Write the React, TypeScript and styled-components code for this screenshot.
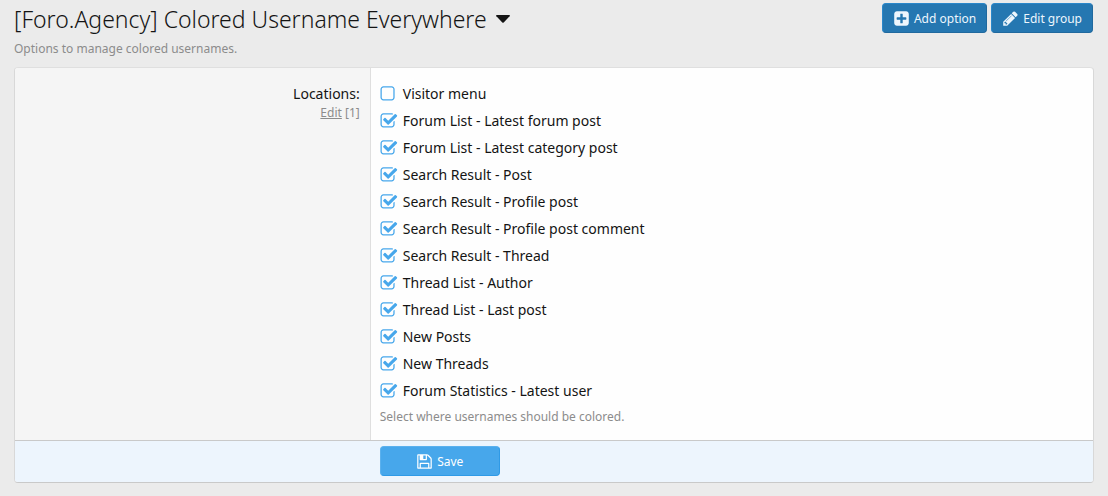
import React, { useState } from "react";
import styled, { createGlobalStyle } from "styled-components";

const GlobalStyle = createGlobalStyle`
  * { box-sizing: border-box; }
  body {
    margin: 0;
    background: #ebebeb;
    color: #141414;
    font-family: "Segoe UI", "Noto Sans", "Open Sans", sans-serif;
    font-size: 14px;
    line-height: 21px;
  }
`;

const paths = {
  plus: "M1408 960v-128q0-26-19-45t-45-19h-320v-320q0-26-19-45t-45-19h-128q-26 0-45 19t-19 45v320h-320q-26 0-45 19t-19 45v128q0 26 19 45t45 19h320v320q0 26 19 45t45 19h128q26 0 45-19t19-45v-320h320q26 0 45-19t19-45zm256-544v960q0 119-84.5 203.5t-203.5 84.5h-960q-119 0-203.5-84.5t-84.5-203.5v-960q0-119 84.5-203.5t203.5-84.5h960q119 0 203.5 84.5t84.5 203.5z",
  pencil: "M491 1536l91-91-235-235-91 91v107h128v128h107zm523-928q0-22-22-22-10 0-17 7l-542 542q-7 7-7 17 0 22 22 22 10 0 17-7l542-542q7-7 7-17zm-54-192l416 416-832 832h-416v-416zm683 96q0 53-37 90l-166 166-416-416 166-165q36-38 90-38 53 0 91 38l235 234q37 39 37 91z",
  save: "M512 1536h768v-384h-768v384zm896 0h128v-896q0-14-10-38.5t-20-34.5l-281-281q-10-10-34-20t-39-10v416q0 40-28 68t-68 28h-576q-40 0-68-28t-28-68v-416h-128v1280h128v-416q0-40 28-68t68-28h832q40 0 68 28t28 68v416zm-384-928v-320q0-13-9.5-22.5t-22.5-9.5h-192q-13 0-22.5 9.5t-9.5 22.5v320q0 13 9.5 22.5t22.5 9.5h192q13 0 22.5-9.5t9.5-22.5zm640 32v928q0 40-28 68t-68 28h-1344q-40 0-68-28t-28-68v-1344q0-40 28-68t68-28h928q40 0 88 20t76 48l280 280q28 28 48 76t20 88z",
  box: "M1312 256h-832q-66 0-113 47t-47 113v832q0 66 47 113t113 47h832q66 0 113-47t47-113v-832q0-66-47-113t-113-47zm288 160v832q0 119-84.5 203.5t-203.5 84.5h-832q-119 0-203.5-84.5t-84.5-203.5v-832q0-119 84.5-203.5t203.5-84.5h832q119 0 203.5 84.5t84.5 203.5z",
  checkedBox: "M1472 930v318q0 119-84.5 203.5t-203.5 84.5h-832q-119 0-203.5-84.5t-84.5-203.5v-832q0-119 84.5-203.5t203.5-84.5h832q63 0 117 25 15 7 18 23 3 17-9 29l-49 49q-10 10-23 10-3 0-9-2-23-6-45-6h-832q-66 0-113 47t-47 113v832q0 66 47 113t113 47h832q66 0 113-47t47-113v-254q0-13 9-22l64-64q10-10 23-10 6 0 12 3 20 8 20 29zm231-489l-814 814q-24 24-57 24t-57-24l-430-430q-24-24-24-57t24-57l110-110q24-24 57-24t57 24l263 263 647-647q24-24 57-24t57 24l110 110q24 24 24 57t-24 57z",
};

const Glyph = styled.svg<{ $size: number }>`
  flex: none;
  display: block;
  width: ${(p) => p.$size}px;
  height: ${(p) => p.$size}px;
  fill: currentColor;
`;

function Icon({ name, size, left = 0 }: { name: keyof typeof paths; size: number; left?: number }) {
  return (
    <Glyph $size={size} viewBox={`${left} 0 1792 1792`} aria-hidden="true">
      <path d={paths[name]} />
    </Glyph>
  );
}

const Page = styled.main`
  padding: 3px 14px 13px;
`;

const Header = styled.header`
  display: flex;
  align-items: flex-start;
  justify-content: space-between;
  gap: 16px;
  margin-bottom: 8px;
`;

const Title = styled.h1`
  margin: 0;
  font-size: 23px;
  font-weight: 300;
  line-height: 32px;
`;

const TitleButton = styled.button`
  display: flex;
  align-items: center;
  gap: 9px;
  padding: 0;
  border: 0;
  background: none;
  color: inherit;
  font: inherit;
  text-align: left;
  cursor: pointer;
`;

const Caret = styled.svg`
  width: 14px;
  height: 8px;
  fill: currentColor;
`;

const Description = styled.p`
  margin: 4px 0 0;
  color: #8c8c8c;
  font-size: 12px;
  line-height: 20px;
`;

const Actions = styled.div`
  display: flex;
  flex: none;
  gap: 4px;
  padding-right: 1px;
`;

const Button = styled.button<{ $primary?: boolean }>`
  display: flex;
  align-items: center;
  justify-content: center;
  gap: 4px;
  height: 30px;
  min-width: ${(p) => (p.$primary ? "120px" : "0")};
  padding: 0 10px;
  border: 1px solid;
  border-color: ${(p) =>
    p.$primary ? "#5bb1ee #2f9ae6 #2f9ae6 #5bb1ee" : "#2a87ca #20699e #20699e #2a87ca"};
  border-radius: 4px;
  background: ${(p) => (p.$primary ? "#47a7eb" : "#2577b1")};
  color: ${(p) => (p.$primary ? "#ffffff" : "#edf6fd")};
  font: inherit;
  font-size: 12px;
  cursor: pointer;
`;

const Panel = styled.form`
  overflow: hidden;
  border: 1px solid;
  border-color: #dfdfdf #d8d8d8 #c9c9c9 #d8d8d8;
  border-radius: 4px;
  background: #fefefe;
`;

const Row = styled.div`
  display: grid;
  grid-template-columns: 33% 1fr;
`;

const LabelCell = styled.div`
  padding: 15px 10px;
  border-right: 1px solid #dfdfdf;
  background: #f5f5f5;
  text-align: right;
`;

const Hint = styled.div`
  color: #8c8c8c;
  font-size: 12px;
  line-height: 18px;

  a { color: inherit; }
`;

const ControlCell = styled.div`
  padding: 15px 9px 14px;
`;

const Choices = styled.ul`
  display: grid;
  gap: 6px;
  margin: 0;
  padding: 0;
  list-style: none;
`;

const Choice = styled.label`
  position: relative;
  display: inline-flex;
  align-items: center;
  gap: 5px;
  height: 21px;
  vertical-align: top;
  cursor: pointer;
`;

const Box = styled.span`
  color: #47a7eb;
`;

const Check = styled.input`
  position: absolute;
  left: 0;
  width: 18px;
  height: 18px;
  margin: 0;
  opacity: 0;
  cursor: pointer;
`;

const Explain = styled.p`
  margin: 6px 0 0;
  color: #8c8c8c;
  font-size: 12px;
  line-height: 19px;
`;

const SubmitRow = styled(Row)`
  border-top: 1px solid #c9c9c9;
  background: #edf5fd;
`;

const SubmitCell = styled.div`
  grid-column: 2;
  padding: 5px 9px 6px;
`;

const locations = [
  "Visitor menu",
  "Forum List - Latest forum post",
  "Forum List - Latest category post",
  "Search Result - Post",
  "Search Result - Profile post",
  "Search Result - Profile post comment",
  "Search Result - Thread",
  "Thread List - Author",
  "Thread List - Last post",
  "New Posts",
  "New Threads",
  "Forum Statistics - Latest user",
];

function Location({ label, initial }: { label: string; initial: boolean }) {
  const [checked, setChecked] = useState(initial);
  return (
    <Choice>
      <Check type="checkbox" checked={checked} onChange={(e) => setChecked(e.target.checked)} />
      <Box>
        <Icon name={checked ? "checkedBox" : "box"} size={18} left={checked ? 16 : 144} />
      </Box>
      {label}
    </Choice>
  );
}

export default function App() {
  return (
    <Page>
      <GlobalStyle />
      <Header>
        <div>
          <Title>
            <TitleButton type="button">
              [Foro.Agency] Colored Username Everywhere
              <Caret viewBox="0 0 14 8" aria-hidden="true">
                <path d="M.6 0h12.8q.9.4.2 1.200L7.700 7.500q-.7.700-1.400 0L.4 1.200Q-.3.400.6 0z" />
              </Caret>
            </TitleButton>
          </Title>
          <Description>Options to manage colored usernames.</Description>
        </div>
        <Actions>
          <Button type="button"><Icon name="plus" size={17} />Add option</Button>
          <Button type="button"><Icon name="pencil" size={17} />Edit group</Button>
        </Actions>
      </Header>
      <Panel onSubmit={(e) => e.preventDefault()}>
        <Row>
          <LabelCell>
            <div id="locations">Locations:</div>
            <Hint><a href="#edit">Edit</a> [1]</Hint>
          </LabelCell>
          <ControlCell>
            <Choices role="group" aria-labelledby="locations">
              {locations.map((label, i) => (
                <li key={label}><Location label={label} initial={i > 0} /></li>
              ))}
            </Choices>
            <Explain>Select where usernames should be colored.</Explain>
          </ControlCell>
        </Row>
        <SubmitRow>
          <SubmitCell>
            <Button type="submit" $primary><Icon name="save" size={17} />Save</Button>
          </SubmitCell>
        </SubmitRow>
      </Panel>
    </Page>
  );
}
